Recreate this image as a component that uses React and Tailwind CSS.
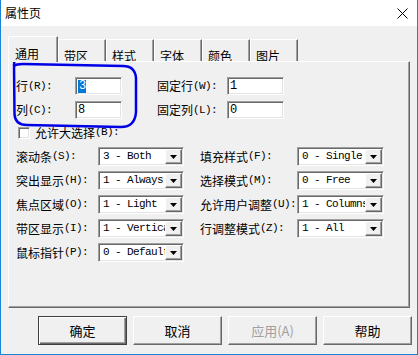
import React from "react";

const CJK = "font-['Noto_Sans_CJK_SC','Microsoft_YaHei',sans-serif]";
const MONO = "font-['Liberation_Mono','Noto_Sans_CJK_SC',monospace]";

function Lbl({ cn, k, className }) {
  return (
    <div className={`flex items-center text-[12px] leading-none text-black whitespace-nowrap ${className}`}>
      <span className={CJK}>{cn}</span>
      <span className={`${MONO} text-[11px] tracking-[-0.6px]`}>({k}):</span>
    </div>
  );
}

function TextBox({ value, selected, className }) {
  return (
    <div
      className={`h-[18px] bg-white border border-[#a0a0a0] border-b-white border-r-white shadow-[inset_1px_1px_0_#696969,inset_-1px_-1px_0_#e3e3e3] flex items-center pl-[2px] ${className}`}
    >
      <span
        className={`${MONO} text-[12px] leading-[13px] tracking-[-1px] ${selected ? "bg-[#0078d7] text-white px-[1px]" : "text-black"}`}
      >
        {value}
      </span>
    </div>
  );
}

function Combo({ value, className }) {
  return (
    <div
      className={`relative h-[19px] bg-white border border-[#a0a0a0] border-b-white border-r-white shadow-[inset_1px_1px_0_#696969,inset_-1px_-1px_0_#e3e3e3] flex items-center ${className}`}
    >
      <div className="flex-1 overflow-hidden h-full flex items-center pl-[4px] mr-[17px]">
        <span className={`${MONO} text-[11px] tracking-[-0.6px] text-black whitespace-nowrap leading-none`}>
          {value}
        </span>
      </div>
      <div className="absolute right-[1px] top-[1px] bottom-[1px] w-[17px] bg-[#f0f0f0] border border-white border-b-[#696969] border-r-[#696969] shadow-[inset_-1px_-1px_0_#a0a0a0] flex items-center justify-center">
        <svg width="7" height="4" viewBox="0 0 7 4">
          <path d="M0 0 H7 L3.5 4 Z" fill="#000" />
        </svg>
      </div>
    </div>
  );
}

function Tab({ label, active }) {
  if (active) {
    return (
      <div className="relative z-10 w-[50px] h-[26px] mb-[-1px] bg-[#f0f0f0] border border-b-0 border-white border-r-[#696969] shadow-[inset_-1px_0_0_#a0a0a0] pl-[6px] pt-[4px]">
        <span className={`${CJK} text-[12px] leading-none text-black`}>{label}</span>
      </div>
    );
  }
  return (
    <div className="w-[48px] h-[22px] bg-[#f0f0f0] border border-b-0 border-white border-r-[#696969] shadow-[inset_-1px_0_0_#a0a0a0] pl-[5px] pt-[3px]">
      <span className={`${CJK} text-[12px] leading-none text-black`}>{label}</span>
    </div>
  );
}

function Btn({ label, def, disabled }) {
  return (
    <div
      className={`w-[89px] h-[29px] flex items-center justify-center bg-[#f0f0f0] ${
        def
          ? "border border-[#404040] shadow-[inset_1px_1px_0_#fff,inset_-1px_-1px_0_#696969,inset_-2px_-2px_0_#a0a0a0]"
          : "border border-white border-b-[#696969] border-r-[#696969] shadow-[inset_-1px_-1px_0_#a0a0a0]"
      }`}
    >
      <span className={`${CJK} text-[13px] leading-none ${disabled ? "text-[#a0a0a0]" : "text-black"}`}>{label}</span>
    </div>
  );
}

const leftRows = [
  ["滚动条", "S", "3 - Both"],
  ["突出显示", "H", "1 - Always"],
  ["焦点区域", "O", "1 - Light"],
  ["带区显示", "I", "1 - Vertical"],
  ["鼠标指针", "P", "0 - Default"],
];
const rightRows = [
  ["填充样式", "F", "0 - Single"],
  ["选择模式", "M", "0 - Free"],
  ["允许用户调整", "U", "1 - Columns"],
  ["行调整模式", "Z", "1 - All"],
];

export default function App() {
  return (
    <div className="relative w-[418px] h-[355px] flex flex-col bg-white border-l border-r border-b border-[#1883d7] overflow-hidden">
      {/* title bar */}
      <div className="h-[26px] shrink-0 bg-white flex items-center justify-between pl-[4px] pr-[9px]">
        <span className={`${CJK} text-[12px] leading-none text-black`}>属性页</span>
        <svg width="11" height="11" viewBox="0 0 11 11">
          <path d="M0.5 0.5 L10.5 10.5 M10.5 0.5 L0.5 10.5" stroke="#000" strokeWidth="1" />
        </svg>
      </div>

      {/* body */}
      <div className="flex-1 bg-[#f0f0f0] flex flex-col pl-[7px] pt-[9px]">
        {/* tabs */}
        <div className="flex items-end h-[26px]">
          <Tab label="通用" active />
          <Tab label="带区" />
          <Tab label="样式" />
          <Tab label="字体" />
          <Tab label="颜色" />
          <Tab label="图片" />
        </div>

        {/* panel */}
        <div className="w-[402px] h-[247px] border border-white border-b-[#696969] border-r-[#696969] shadow-[inset_-1px_-1px_0_#a0a0a0] pl-[7px] pt-[15px] flex flex-col">
          <div className="flex items-center h-[18px]">
            <Lbl cn="行" k="R" className="w-[59px]" />
            <TextBox value="3" selected className="w-[47px]" />
            <Lbl cn="固定行" k="W" className="w-[70px] ml-[35px]" />
            <TextBox value="1" className="w-[57px]" />
          </div>
          <div className="flex items-center h-[18px] mt-[6px]">
            <Lbl cn="列" k="C" className="w-[59px]" />
            <TextBox value="8" className="w-[47px]" />
            <Lbl cn="固定列" k="L" className="w-[70px] ml-[35px]" />
            <TextBox value="0" className="w-[57px]" />
          </div>
          <div className="flex items-center h-[13px] mt-[7px] ml-[2px]">
            <div className="w-[12px] h-[12px] bg-white border border-[#a0a0a0] border-b-white border-r-white shadow-[inset_1px_1px_0_#696969,inset_-1px_-1px_0_#e3e3e3]" />
            <Lbl cn="允许大选择" k="B" className="ml-[5px]" />
          </div>

          <div className="flex flex-col gap-[5px] mt-[8px]">
            {leftRows.map((l, i) => {
              const r = rightRows[i];
              return (
                <div key={i} className="flex items-center h-[19px]">
                  <Lbl cn={l[0]} k={l[1]} className="w-[82px]" />
                  <Combo value={l[2]} className="w-[86px]" />
                  {r ? (
                    <>
                      <Lbl cn={r[0]} k={r[1]} className="w-[97px] ml-[16px]" />
                      <Combo value={r[2]} className="w-[87px]" />
                    </>
                  ) : null}
                </div>
              );
            })}
          </div>
        </div>

        {/* buttons */}
        <div className="flex justify-end gap-[6px] pr-[5px] mt-[8px]">
          <Btn label="确定" def />
          <Btn label="取消" />
          <Btn label="应用(A)" disabled />
          <Btn label="帮助" />
        </div>
      </div>

      {/* hand-drawn annotation */}
      <svg className="absolute left-0 top-0 pointer-events-none" width="418" height="355" viewBox="0 0 418 355">
        <path
          d="M13.5 57 L13 66 Q15 64 22 64 L122 66 Q134 66 135 78 L135 112 Q134 127 120 127 L26 125 Q14 125 13.5 114 L13 64"
          fill="none"
          stroke="#0000e6"
          strokeWidth="2.5"
          strokeLinecap="round"
          strokeLinejoin="round"
        />
      </svg>
    </div>
  );
}
